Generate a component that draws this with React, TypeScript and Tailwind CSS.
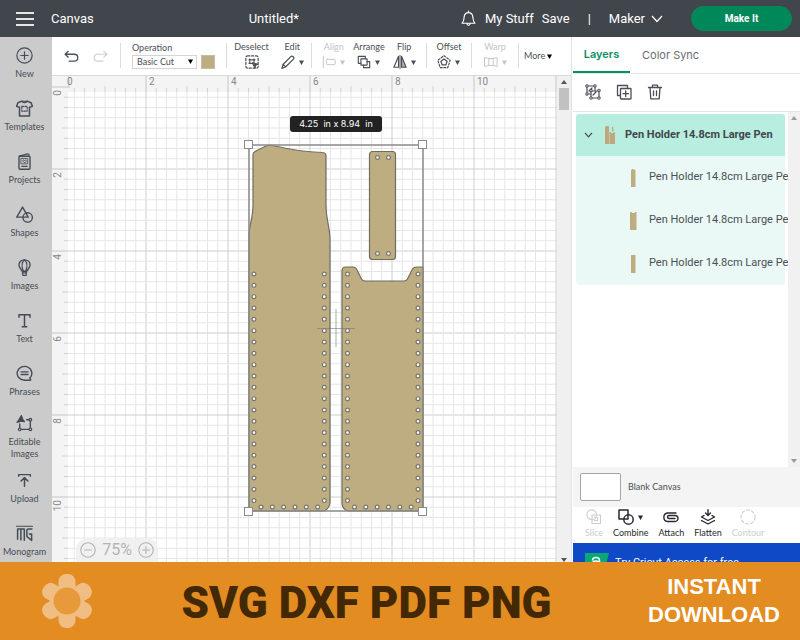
import type { ReactNode } from 'react';

function Icon({ size = 16, className, children }: { size?: number; className?: string; children: ReactNode }) {
  return (
    <svg
      width={size}
      height={size}
      viewBox="0 0 16 16"
      fill="none"
      stroke="currentColor"
      strokeWidth="1.1"
      strokeLinecap="round"
      strokeLinejoin="round"
      className={className}
      aria-hidden="true"
    >
      {children}
    </svg>
  );
}

const sidebarItems = [
  {
    label: 'New',
    icon: <><circle cx="8" cy="8" r="7.2" /><path d="M8 4.5v7M4.5 8h7" /></>,
  },
  {
    label: 'Templates',
    icon: (
      <>
        <path d="M5.5 1 1.8 2.6.5 6l2.8.9V15h9.4V6.9l2.8-.9-1.3-3.4L10.5 1C9.5 2.8 6.5 2.8 5.5 1Z" strokeWidth="1.4" />
        <path d="M5.5 6h5v4.500h-5z" strokeDasharray="1.5 1.3" />
        <path d="M5.5 1.200h5" />
      </>
    ),
  },
  {
    label: 'Projects',
    icon: (
      <>
        <rect x="2.8" y="3" width="10.4" height="12.3" rx="1" strokeWidth="1.3" />
        <path d="M3 3 11 .8l1.200.6V3" />
        <path d="M5 5.200h6v5H5z" strokeWidth=".8" />
        <path d="M8 9.200 6.400 7.600c-.3-.9.900-1.300 1.600-.5.700-.8 1.900-.4 1.600.5Z" strokeWidth=".8" />
        <path d="M5.500 12.600h5" />
      </>
    ),
  },
  {
    label: 'Shapes',
    icon: <><path d="M6.200 1 .7 10.500h10.800Z" strokeWidth="1.3" /><circle cx="11" cy="10.8" r="4.4" strokeWidth="1.3" /></>,
  },
  {
    label: 'Images',
    icon: (
      <>
        <path d="M8 .8c3.300 0 5.200 2.200 5.200 4.800 0 2.500-1.900 3.700-3 5.900H5.800c-1.100-2.200-3-3.400-3-5.900C2.800 3 4.700.8 8 .8Z" strokeWidth="1.3" />
        <path d="M6.800 11.300C5.300 7.500 5.200 3.200 8 .8c2.800 2.400 2.700 6.700 1.200 10.500M6.200 11.500v1.700M9.800 11.500v1.700" />
        <rect x="6.2" y="13" width="3.6" height="2.4" rx=".6" />
      </>
    ),
  },
  {
    label: 'Text',
    icon: <path d="M2.800 5V2.500h10.400V5M8 2.500v11.300M5.800 13.800h4.400" strokeWidth="1.4" />,
  },
  {
    label: 'Phrases',
    icon: <><path d="M13 12.300A6.900 6.500 0 1 0 8 14.300h5.500a.5.500 0 0 0 .3-.8Z" strokeWidth="1.3" /><path d="M4.800 6.500h6.500M4.800 9h6.500" strokeWidth="1.3" /></>,
  },
  {
    label: 'Editable Images',
    tall: true,
    icon: (
      <>
        <path d="M5 .5 6.400 4l1.600 2.300-3.600-.5L1 7l1.800-2.700Z" fill="currentColor" />
        <path d="M10 4.500h2.500M13.500 6v6M5 13.500h7M3.500 8.500V12" strokeWidth="1.3" />
        <circle cx="13.5" cy="4.5" r="1.3" /><circle cx="13.5" cy="13.5" r="1.3" /><circle cx="3.5" cy="13.5" r="1.3" />
      </>
    ),
  },
  {
    label: 'Upload',
    icon: <><path d="M2.500 4V2.500h11V4" strokeWidth="1.3" /><path d="M8 13.500V5.500M4.800 8.500 8 5.300l3.200 3.200" strokeWidth="1.4" /></>,
  },
  {
    label: 'Monogram',
    icon: (
      <>
        <path d="M.5 1.200h15" />
        <path d="M1.500 13.500V3.800h6.300v10.500M4.600 4v10" strokeWidth="1.4" />
        <path d="M15 3.800h-3.500c-1.300 0-1.300 1-1.300 2v5l4.500 3.700V8.500h-2.200" strokeWidth="1.4" />
      </>
    ),
  },
];

function Caret({ className = '' }: { className?: string }) {
  return (
    <svg width="5" height="5" viewBox="0 0 5 5" fill="currentColor" className={className} aria-hidden="true">
      <path d="M0 .5h5L2.500 5z" />
    </svg>
  );
}

function Header() {
  return (
    <header className="flex h-[37px] shrink-0 items-center bg-[#41464c] pl-4 pr-2 text-[13px] text-white">
      <button aria-label="Menu" className="flex w-[18px] flex-col gap-1">
        <span className="h-0.5 bg-[#e4e5e6]" />
        <span className="h-0.5 bg-[#e4e5e6]" />
        <span className="h-0.5 bg-[#e4e5e6]" />
      </button>
      <span className="ml-[17px]">Canvas</span>
      <h1 className="flex-1 pr-1.5 text-center">Untitled*</h1>
      <button aria-label="Notifications" className="mr-2">
        <Icon size={17}>
          <path d="M2 12.500c1.800-1.700 1.600-3.700 1.900-6C4.200 4 5.700 2.500 8 2.500S11.800 4 12.100 6.500c.3 2.300.1 4.300 1.900 6ZM6.500 12.700c.2 2.200 2.800 2.200 3 0M8 2.300V1" />
        </Icon>
      </button>
      <a href="#stuff" className="mr-2">My Stuff</a>
      <a href="#save">Save</a>
      <span className="mx-[18px]">|</span>
      <button className="flex items-center gap-1.5">
        Maker
        <svg width="12" height="8" viewBox="0 0 12 8" fill="none" stroke="currentColor" strokeWidth="1.2" aria-hidden="true">
          <path d="m1 1 5 5.500L11 1" />
        </svg>
      </button>
      <button className="ml-7 h-[25px] w-[101px] rounded-full bg-[#00875a] text-[10px] font-bold">Make It</button>
    </header>
  );
}

function Sidebar() {
  return (
    <nav className="w-[52px] shrink-0 overflow-hidden bg-[#cbcbcb] pr-[3px] text-[#454b55]">
      {sidebarItems.map((item) => (
        <button
          key={item.label}
          className={`flex w-full flex-col items-center justify-center gap-1 font-[Lato,sans-serif] text-[9px] leading-3 ${item.tall ? 'h-[54px] px-1 pt-1' : 'h-[53px]'}`}
        >
          <Icon size={17} className="shrink-0">{item.icon}</Icon>
          {item.label}
        </button>
      ))}
    </nav>
  );
}

function Tool({ label, caret, muted, children }: { label: string; caret?: boolean; muted?: boolean; children: ReactNode }) {
  return (
    <button disabled={muted} className={`flex flex-col items-center gap-0.5 ${muted ? 'text-[#c4c4c4]' : 'text-[#4a4e55]'}`}>
      <span className="leading-3">{label}</span>
      <span className="flex h-3.5 items-center gap-1">
        <Icon size={14}>{children}</Icon>
        {caret && <Caret />}
      </span>
    </button>
  );
}

function Divider() {
  return <div className="h-[25px] w-px shrink-0 bg-[#dcdcdc]" />;
}

function Toolbar() {
  return (
    <div className="flex h-[39px] shrink-0 items-center overflow-hidden border-b border-[#d9d9d9] bg-white pb-0.5 font-[Lato,sans-serif] text-[9px] text-[#4a4e55]">
      <div className="flex w-[68px] shrink-0 items-center gap-3.5 pl-3 pt-0.5">
        <button aria-label="Undo">
          <Icon size={15}><path d="M4.500 2.500 1.200 5.600l3.300 3.100M1.500 5.600h9.500a3.700 3.700 0 0 1 0 7.400H5.500" strokeWidth="1.4" /></Icon>
        </button>
        <button aria-label="Redo" className="text-[#cfcfcf]">
          <Icon size={15}><path d="m11.500 2.500 3.300 3.100-3.300 3.100M14.500 5.600H5a3.700 3.700 0 0 0 0 7.400h5.500" strokeWidth="1.3" /></Icon>
        </button>
      </div>
      <Divider />
      <div className="flex w-[105px] shrink-0 flex-col gap-px pl-[11px]">
        <label htmlFor="operation" className="leading-3">Operation</label>
        <div className="flex items-center gap-1">
          <div className="relative">
            <select id="operation" className="h-3.5 w-[65px] appearance-none border border-[#d4d4d4] bg-white pl-1 text-[9px] leading-3">
              <option>Basic Cut</option>
            </select>
            <Caret className="pointer-events-none absolute right-1 top-1 text-black" />
          </div>
          <button aria-label="Operation color" className="size-3.5 border border-[#c9bc9c] bg-[#bead81]" />
        </div>
      </div>
      <Divider />
      <div className="flex w-[84px] shrink-0 justify-center gap-3">
        <Tool label="Deselect">
          <rect x="1" y="1" width="14" height="14" rx="2" strokeDasharray="2.5 2" strokeWidth="1.4" />
          <path d="M5.500 4.500v6M10.300 4.500v5M4.500 5.500h7M4.500 9.500h5" strokeDasharray="2 1" strokeWidth="1.3" />
          <path d="m8.500 9 6.500 1.500-2.500 1-1 3Z" fill="currentColor" />
        </Tool>
        <Tool label="Edit" caret>
          <path d="M1 15.200 2.300 10.800 11.500 1.500c1.500-1 4 1.300 3 2.900L5.200 13.700ZM2.500 10.800l2.700 2.700" strokeWidth="1.4" />
        </Tool>
      </div>
      <Divider />
      <div className="flex w-[114px] shrink-0 justify-center gap-2">
        <Tool label="Align" caret muted>
          <path d="M1.500 1.500v13" /><rect x="5" y="5" width="10" height="6" rx="1" />
        </Tool>
        <Tool label="Arrange" caret>
          <path d="M4.500 9.500H1.500v-8h8v2.500" strokeWidth="1.3" /><rect x="4.5" y="4.5" width="7" height="7" strokeWidth="1.3" /><path d="M11.500 7.500h3v7h-7v-3" strokeWidth="1.3" />
        </Tool>
        <Tool label="Flip" caret>
          <path d="M6.300 1.500v12.500H1Z" strokeWidth="1.3" /><path d="M9.700 1.500v12.500H15Z" fill="currentColor" fillOpacity=".45" strokeWidth="1.3" /><path d="M8 .5v15" />
        </Tool>
      </div>
      <Divider />
      <div className="flex w-11 shrink-0 justify-center">
        <Tool label="Offset" caret>
          <path d="m8 4.500 3.500 2.600-1.300 4.200H5.800L4.500 7.100Z" strokeWidth="1.4" />
          <path d="m8 .8 7 5.200-2.700 8.500H3.700L1 6Z" strokeDasharray="2.2 1.8" strokeWidth="1.3" />
        </Tool>
      </div>
      <Divider />
      <div className="flex w-[46px] shrink-0 justify-center">
        <Tool label="Warp" caret muted>
          <path d="M1 3c4.500 1.500 9.500 1.500 14 0v10c-4.500-1.500-9.500-1.500-14 0ZM5.500 4v8M10.500 4v8" />
        </Tool>
      </div>
      <Divider />
      <button className="flex items-center gap-0.5 pl-[5px] pt-0.5">
        More <Caret className="text-black" />
      </button>
    </div>
  );
}

// Canvas is drawn at 75%: one inch is 41px, with a line every quarter inch
const INCH = 41;
const ORIGIN = { x: 12, y: 11 };
const RULER = 16;

const quarters = Array.from({ length: 200 }, (_, i) => i);
const rulerMarks = [0, 2, 4, 6, 8, 10];

// Rivet holes: two columns of 21 and a row of 6 along the bottom
const stitches = (left: number, right: number, bottom: number) => [
  ...Array.from({ length: 21 }, (_, i) => [left, 129 + i * 11.33]),
  ...Array.from({ length: 21 }, (_, i) => [right, 129 + i * 11.33]),
  ...Array.from({ length: 6 }, (_, i) => [bottom + i * 11.33, 362]),
];

const holes = [
  ...stitches(5, 75.3, 12),
  ...stitches(98.5, 169, 105.5),
  [128.5, 12.5],
  [139.5, 12.5],
  [128.5, 108.5],
  [139.5, 108.5],
];

function Artboard() {
  return (
    <svg className="absolute inset-0 h-full w-full" fontFamily="Roboto, sans-serif" aria-label="Pen holder design">
      <rect width="100%" height="100%" fill="#fff" />
      {quarters.map((q) => {
        const x = ORIGIN.x + (q * INCH) / 4;
        const y = ORIGIN.y + (q * INCH) / 4;
        return (
          <g key={q} stroke={q % 8 === 0 ? '#cecece' : '#e6e6e6'}>
            <line x1={x} x2={x} y1="0" y2="100%" />
            <line x1="0" x2="100%" y1={y} y2={y} />
          </g>
        );
      })}

      {/* Rulers */}
      <rect width="100%" height={RULER} fill="#f4f4f4" />
      <rect width={RULER} height="100%" fill="#f4f4f4" />
      {quarters.map((q) => {
        const x = ORIGIN.x + (q * INCH) / 4;
        const y = ORIGIN.y + (q * INCH) / 4;
        const size = q % 8 === 0 ? 16 : q % 4 === 0 ? 6 : 4;
        return (
          <g key={q} stroke={q % 8 === 0 ? '#c6c6c6' : '#d2d2d2'}>
            {q > 0 && <line x1={x} x2={x} y1={RULER - size} y2={RULER} />}
            <line x1={RULER - size} x2={RULER} y1={y} y2={y} />
          </g>
        );
      })}
      <path d="M17 0v12" stroke="#c6c6c6" />
      {rulerMarks.map((n) => (
        <g key={n} fontSize="10" fill="#85888c">
          <text x={ORIGIN.x + n * INCH + 3} y="9">{n}</text>
          <text textAnchor="end" transform={`translate(9 ${ORIGIN.y + n * INCH + 3}) rotate(-90)`}>{n}</text>
        </g>
      ))}

      {/* Selected group */}
      <g transform="translate(197 69)">
        <g fill="#bead81" stroke="#6f6d62" strokeWidth="1.2">
          <path d="M4 10Q4 7.500 6 6.500L17 1Q21-.5 26 1C45 5.500 60 7 73 7.500Q77 7.500 77 11V60C77 75 80.500 80 81 93V358Q80 364 75 366H6Q0 366 0 361V88C1 78 4 72 4 60Z" />
          <path d="M93 126Q93 122 97 122H104Q107 122 108.500 126L112.500 134Q113.500 136 116 136H155Q157.500 136 158.500 134L162.500 126Q164 122 168 122H174V366H99Q93 364 93 358Z" />
          <rect x="120.5" y="6.5" width="26" height="108" rx="3" />
        </g>
        <g fill="#fff" stroke="#77756d" strokeWidth="1.2">
          {holes.map(([x, y]) => (
            <circle key={`${x}-${y}`} cx={x} cy={y} r="1.9" />
          ))}
        </g>
        <path d="M87 164v38M68 183.500h38" stroke="#777" strokeOpacity=".6" />
        <rect width="174" height="366" fill="none" stroke="#8a8a8a" strokeWidth="1.5" />
        <g fill="#fff" stroke="#8a8a8a">
          <rect x="-4.5" y="-4.5" width="8" height="8" />
          <rect x="169.5" y="-4.5" width="8" height="8" />
          <rect x="-4.5" y="362.5" width="8" height="8" />
          <rect x="169.5" y="362.5" width="8" height="8" />
        </g>
      </g>
    </svg>
  );
}

function ScrollArrow({ up }: { up?: boolean }) {
  return (
    <svg width="6" height="4" viewBox="0 0 6 4" fill="currentColor" aria-hidden="true">
      <path d={up ? 'M0 4h6L3 0z' : 'M0 0h6L3 4z'} />
    </svg>
  );
}

function Workspace() {
  return (
    <main className="flex min-w-0 flex-1 flex-col">
      <Toolbar />
      <div className="flex min-h-0 flex-1">
        <div className="relative flex-1 overflow-hidden">
          <Artboard />
          <div className="absolute left-[238px] top-10 flex h-4 w-[92px] items-center justify-center rounded-[3px] bg-[#222] font-[Inter,sans-serif] text-[9px] whitespace-pre text-white">
            4.25  in x 8.94  in
          </div>
          <div className="absolute bottom-0 left-6 flex h-6 w-[82px] items-center justify-between rounded-t-xl bg-[#f0f0f0]/90 px-1 text-[16px] text-[#b4b4b4]">
            <button aria-label="Zoom out">
              <Icon size={16}><circle cx="8" cy="8" r="7.2" /><path d="M4.500 8h7" /></Icon>
            </button>
            75%
            <button aria-label="Zoom in">
              <Icon size={16}><circle cx="8" cy="8" r="7.2" /><path d="M4.500 8h7M8 4.500v7" /></Icon>
            </button>
          </div>
        </div>
        <div className="flex w-3.5 flex-col items-center bg-[#f0f0f0] pt-1 text-[#555]">
          <ScrollArrow up />
          <div className="mt-1 h-[22px] w-2.5 bg-[#c1c1c1]" />
          <div className="mt-auto"><ScrollArrow /></div>
        </div>
      </div>
    </main>
  );
}

const layers = [
  { id: 1, thumb: <path d="M1 1 2.500 0l3 1v17H1Z" /> },
  { id: 2, thumb: <path d="M0 0h1.500l.5 1h2.500L5 0h1.500v18H0Z" /> },
  { id: 3, thumb: <path d="M1 0h4.500v18H1Z" /> },
];

const actions = [
  {
    label: 'Slice',
    muted: true,
    icon: <><path d="M5.500 10.500A4.800 4.800 0 1 1 10.500 5" /><path d="M6 6h8.500v8.500H6z" /><path d="M10.500 6a5 5 0 0 1-4.500 5M8.500 8.500h3v3h-3" /></>,
  },
  {
    label: 'Combine',
    caret: true,
    icon: <><path d="M1 1h9v9H1z" strokeWidth="1.5" /><circle cx="10.5" cy="10.5" r="4.7" strokeWidth="1.5" /></>,
  },
  {
    label: 'Attach',
    icon: <path d="M12 9.500H6a1.500 1.500 0 0 1 0-3h6a3 3 0 0 1 0 6H4.500a4.300 4.300 0 0 1 0-8.500H13" strokeWidth="1.4" />,
  },
  {
    label: 'Flatten',
    icon: <path d="M8 .8v5.400M5.500 4 8 6.500 10.500 4M4 6.500 1.500 8 8 11.500 14.500 8 12 6.500M1.500 11.500 8 15l6.500-3.500" strokeWidth="1.4" />,
  },
  {
    label: 'Contour',
    muted: true,
    icon: <circle cx="8" cy="8" r="7" strokeDasharray="3 2.2" />,
  },
];

function LayersPanel() {
  return (
    <aside className="flex w-[229px] shrink-0 flex-col border-l border-[#e2e2e2] bg-white pl-px text-[#4a4e55]">
      <div role="tablist" className="flex h-[37px] shrink-0 border-b border-[#e6e6e6] font-[Inter,sans-serif] text-[11px]">
        <button role="tab" aria-selected="true" className="w-[57px] border-b-2 border-[#0a8f63] font-semibold text-[#0a8f63]">
          Layers
        </button>
        <button role="tab" aria-selected="false" className="pl-3 text-[#6a6d72]">Color Sync</button>
      </div>

      <div className="flex h-[38px] shrink-0 items-center gap-[15px] border-b border-[#e6e6e6] pb-0.5 pl-3">
        <button aria-label="Ungroup">
          <Icon>
            <path d="M3 2h6M2 3v6M10 3v4M3 10h3M7 7h6M14 8v5M7 14h6M6 8v5M4 7l3-3M8 11l3-3" strokeWidth="1.2" />
            <g fill="#fff">
              <circle cx="2" cy="2" r="1.2" /><circle cx="10" cy="2" r="1.2" /><circle cx="2" cy="10" r="1.2" />
              <circle cx="6" cy="6.5" r="1.2" /><circle cx="14" cy="6.5" r="1.2" /><circle cx="6" cy="14" r="1.2" /><circle cx="14" cy="14" r="1.2" />
            </g>
          </Icon>
        </button>
        <button aria-label="Duplicate">
          <Icon><path d="M4 11.500H1.500v-10h10V4" strokeWidth="1.3" /><rect x="4.5" y="4.5" width="10.5" height="10.5" rx=".5" strokeWidth="1.3" /><path d="M9.700 7v5.500M7 9.700h5.500" strokeWidth="1.3" /></Icon>
        </button>
        <button aria-label="Delete">
          <Icon><path d="M1.500 3.500h13M5.500 3.300V1.200h5v2.100M3 3.800l.8 11h8.400l.8-11M6.500 7v4.500M9.500 7v4.500" strokeWidth="1.3" /></Icon>
        </button>
      </div>

      <div className="flex min-h-0 flex-1 text-[11px]">
        <ul className="min-w-0 flex-1 overflow-hidden pl-[3px] pt-0.5">
          <li>
            <button className="flex h-[42px] w-[209px] items-center rounded-t-[3px] bg-[#b8eedf] pl-2 font-bold text-[#41464c]">
              <svg width="9" height="6" viewBox="0 0 9 6" fill="none" stroke="currentColor" strokeWidth="1.2" aria-hidden="true">
                <path d="m1 .8 3.500 4L8 .8" />
              </svg>
              <svg width="10" height="18" viewBox="0 0 10 18" fill="#bfa67c" className="ml-3" aria-hidden="true">
                <path d="M0 1 1.500 0h2L4 1v17H0ZM4.500 6H6v1h3V6h1v12H4.500ZM7 1h1.300v4.500H7Z" />
              </svg>
              <span className="ml-2.5 whitespace-nowrap">Pen Holder 14.8cm Large Pen</span>
            </button>
            <ul className="w-[209px] rounded-b-[3px] bg-[#eaf9f5]">
              {layers.map((layer) => (
                <li key={layer.id}>
                  <button className="flex h-[43px] items-center pl-[54px]">
                    <svg width="7" height="18" viewBox="0 0 7 18" fill="#bead81" className="shrink-0" aria-hidden="true">
                      {layer.thumb}
                    </svg>
                    <span className="ml-3 whitespace-nowrap">Pen Holder 14.8cm Large Pe</span>
                  </button>
                </li>
              ))}
            </ul>
          </li>
        </ul>
        <div className="flex w-3 shrink-0 flex-col items-center justify-between bg-[#f1f1f1] py-1 text-[#999]">
          <ScrollArrow up />
          <ScrollArrow />
        </div>
      </div>

      <div className="flex h-10 shrink-0 items-center gap-[7px] bg-[#f4f4f4] pl-[7px] font-[Lato,sans-serif] text-[9px]">
        <button aria-label="Canvas color" className="h-7 w-[41px] rounded-xs border border-[#a5a5a5] bg-white" />
        Blank Canvas
      </div>

      <div className="flex h-9 shrink-0 items-center gap-2.5 pb-0.5 pl-3 font-[Lato,sans-serif] text-[9px] text-[#26292e]">
        {actions.map((action) => (
          <button
            key={action.label}
            disabled={action.muted}
            className={`flex flex-col items-center gap-0.5 ${action.muted ? 'text-[#cdcdcd]' : ''}`}
          >
            <span className="flex items-center gap-1">
              <Icon size={16}>{action.icon}</Icon>
              {action.caret && <Caret />}
            </span>
            <span className="leading-3">{action.label}</span>
          </button>
        ))}
      </div>

      <a href="#access" className="flex h-[19px] shrink-0 items-start gap-1.5 overflow-hidden bg-[#0f49c6] pl-3 pt-2.5 text-[11px] text-white">
        <svg width="24" height="20" viewBox="0 0 24 20" className="shrink-0" aria-hidden="true">
          <path d="M0 0h24l-5 20H0Z" fill="#0aa876" />
          <path d="M7.500 7.500c0-4 7-4 7 0v4M14 8.500c-4-1.500-6.500 0-6.500 2.500" fill="none" stroke="#fff" strokeWidth="1.5" />
        </svg>
        <span className="mt-0.5 whitespace-nowrap leading-4">Try Cricut Access for free</span>
      </a>
    </aside>
  );
}

function Banner() {
  return (
    <footer className="flex h-[78px] shrink-0 items-center bg-[#e38c22] pl-[41px] pr-5">
      <svg width="52" height="56" viewBox="-26 -28 52 56" className="shrink-0" aria-hidden="true">
        {[0, 60, 120, 180, 240, 300].map((angle) => (
          <rect key={angle} x="-8.5" y="-27" width="17" height="20" rx="7.5" fill="#f0bd83" transform={`rotate(${angle})`} />
        ))}
        <circle r="13.5" fill="#e89a3a" />
      </svg>
      <p className="flex-1 pr-2 pt-1 text-center text-[44px] leading-none font-black whitespace-nowrap text-[#432806]">
        SVG DXF PDF PNG
      </p>
      <p className="w-[132px] text-center font-['Liberation_Sans',sans-serif] text-[22px] leading-7 font-bold text-white">
        INSTANT DOWNLOAD
      </p>
    </footer>
  );
}

export default function App() {
  return (
    <div className="flex h-screen flex-col overflow-hidden font-[Roboto,sans-serif]">
      <Header />
      <div className="flex min-h-0 flex-1">
        <Sidebar />
        <Workspace />
        <LayersPanel />
      </div>
      <Banner />
    </div>
  );
}
